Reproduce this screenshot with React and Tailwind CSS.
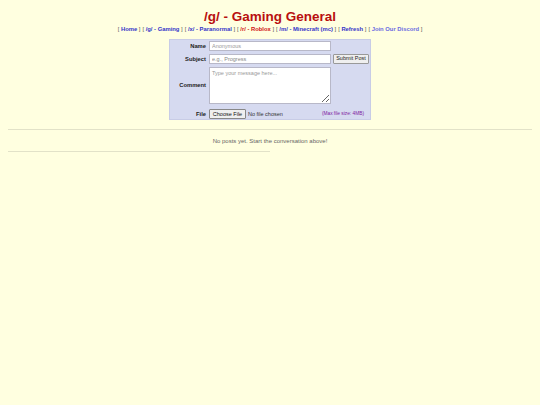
import { useState } from 'react'

const boards = [
  { label: '/g/ - Gaming', current: false },
  { label: '/x/ - Paranormal', current: false },
  { label: '/r/ - Roblox', current: true },
  { label: '/m/ - Minecraft (mc)', current: false },
]

function NavLink({ children, className }) {
  return (
    <span className="text-[#555]">
      [ <a href="#" className={`font-bold no-underline ${className}`}>{children}</a> ]
    </span>
  )
}

export default function App() {
  const [name, setName] = useState('')
  const [subject, setSubject] = useState('')
  const [comment, setComment] = useState('')

  return (
    <div className="min-h-screen bg-[#ffffe0] px-2 pt-[8px] font-['Liberation_Sans',Arial,sans-serif] text-black">
      <h1 className="text-center text-[13.5px] font-bold leading-[18px] text-[#b80f0f]">/g/ - Gaming General</h1>

      {/* board nav */}
      <div className="mt-[-1px] flex justify-center gap-[2px] text-[5.85px] leading-[9px]">
        <NavLink className="text-[#3434c8]">Home</NavLink>
        {boards.map(b => (
          <NavLink key={b.label} className={b.current ? 'text-[#d01010]' : 'text-[#3434c8]'}>{b.label}</NavLink>
        ))}
        <NavLink className="text-[#3434c8]">Refresh</NavLink>
        <NavLink className="text-[#6a6ae0] font-semibold">Join Our Discord</NavLink>
      </div>

      {/* post form */}
      <form className="mx-auto mt-[5px] w-[202px] border border-[#c8cce6] bg-[#d6daf0] px-[1px] pt-[1px]" onSubmit={e => e.preventDefault()}>
        <table className="w-full border-collapse text-[5.8px]">
          <tbody>
            <tr>
              <td className="w-[38px] pr-[3px] text-right font-bold text-[#222]">Name</td>
              <td className="pb-[1.5px]">
                <input
                  value={name}
                  onChange={e => setName(e.target.value)}
                  placeholder="Anonymous"
                  className="block h-[10px] w-[122px] border border-[#b8b8c8] bg-white px-[2px] text-[5.5px] outline-none placeholder:text-[#999]"
                />
              </td>
            </tr>
            <tr>
              <td className="pr-[3px] text-right font-bold text-[#222]">Subject</td>
              <td className="py-[1.5px]">
                <div className="flex items-center gap-[2px]">
                  <input
                    value={subject}
                    onChange={e => setSubject(e.target.value)}
                    placeholder="e.g., Progress"
                    className="block h-[10px] w-[122px] border border-[#b8b8c8] bg-white px-[2px] text-[5.5px] outline-none placeholder:text-[#888]"
                  />
                  <button type="submit" className="h-[10px] w-[36px] rounded-[1px] border border-[#999] bg-[#efefef] text-[5.5px] leading-none text-[#222]">
                    Submit Post
                  </button>
                </div>
              </td>
            </tr>
            <tr>
              <td className="pr-[3px] text-right font-bold text-[#222]">Comment</td>
              <td className="py-[1.5px]">
                <textarea
                  value={comment}
                  onChange={e => setComment(e.target.value)}
                  placeholder="Type your message here..."
                  className="block h-[37px] w-[122px] resize border border-[#b8b8c8] bg-white px-[2px] py-[1px] text-[5.5px] outline-none placeholder:text-[#999]"
                />
              </td>
            </tr>
            <tr>
              <td className="pr-[3px] pt-[3.5px] text-right font-bold text-[#222]">File</td>
              <td className="pt-[3.5px]">
                <div className="flex items-center">
                  <span className="flex h-[10px] w-[37px] items-center justify-center rounded-[1px] border border-[#888] bg-[#efefef] text-[5.5px] text-[#111]">Choose File</span>
                  <span className="ml-[2px] text-[5.5px] text-[#333]">No file chosen</span>
                  <span className="ml-auto mr-[5px] text-[4.8px] text-[#8020a0]">(Max file size: 4MB)</span>
                </div>
              </td>
            </tr>
          </tbody>
        </table>
      </form>

      <hr className="mt-[9px] border-0 border-t border-[#e2e2c8]" />
      <div className="pt-[8px] pb-[6px] text-center text-[6px] leading-[7px] text-[#666]">No posts yet. Start the conversation above!</div>
      <hr className="w-[262px] border-0 border-t border-[#e2e2c8]" />
    </div>
  )
}
